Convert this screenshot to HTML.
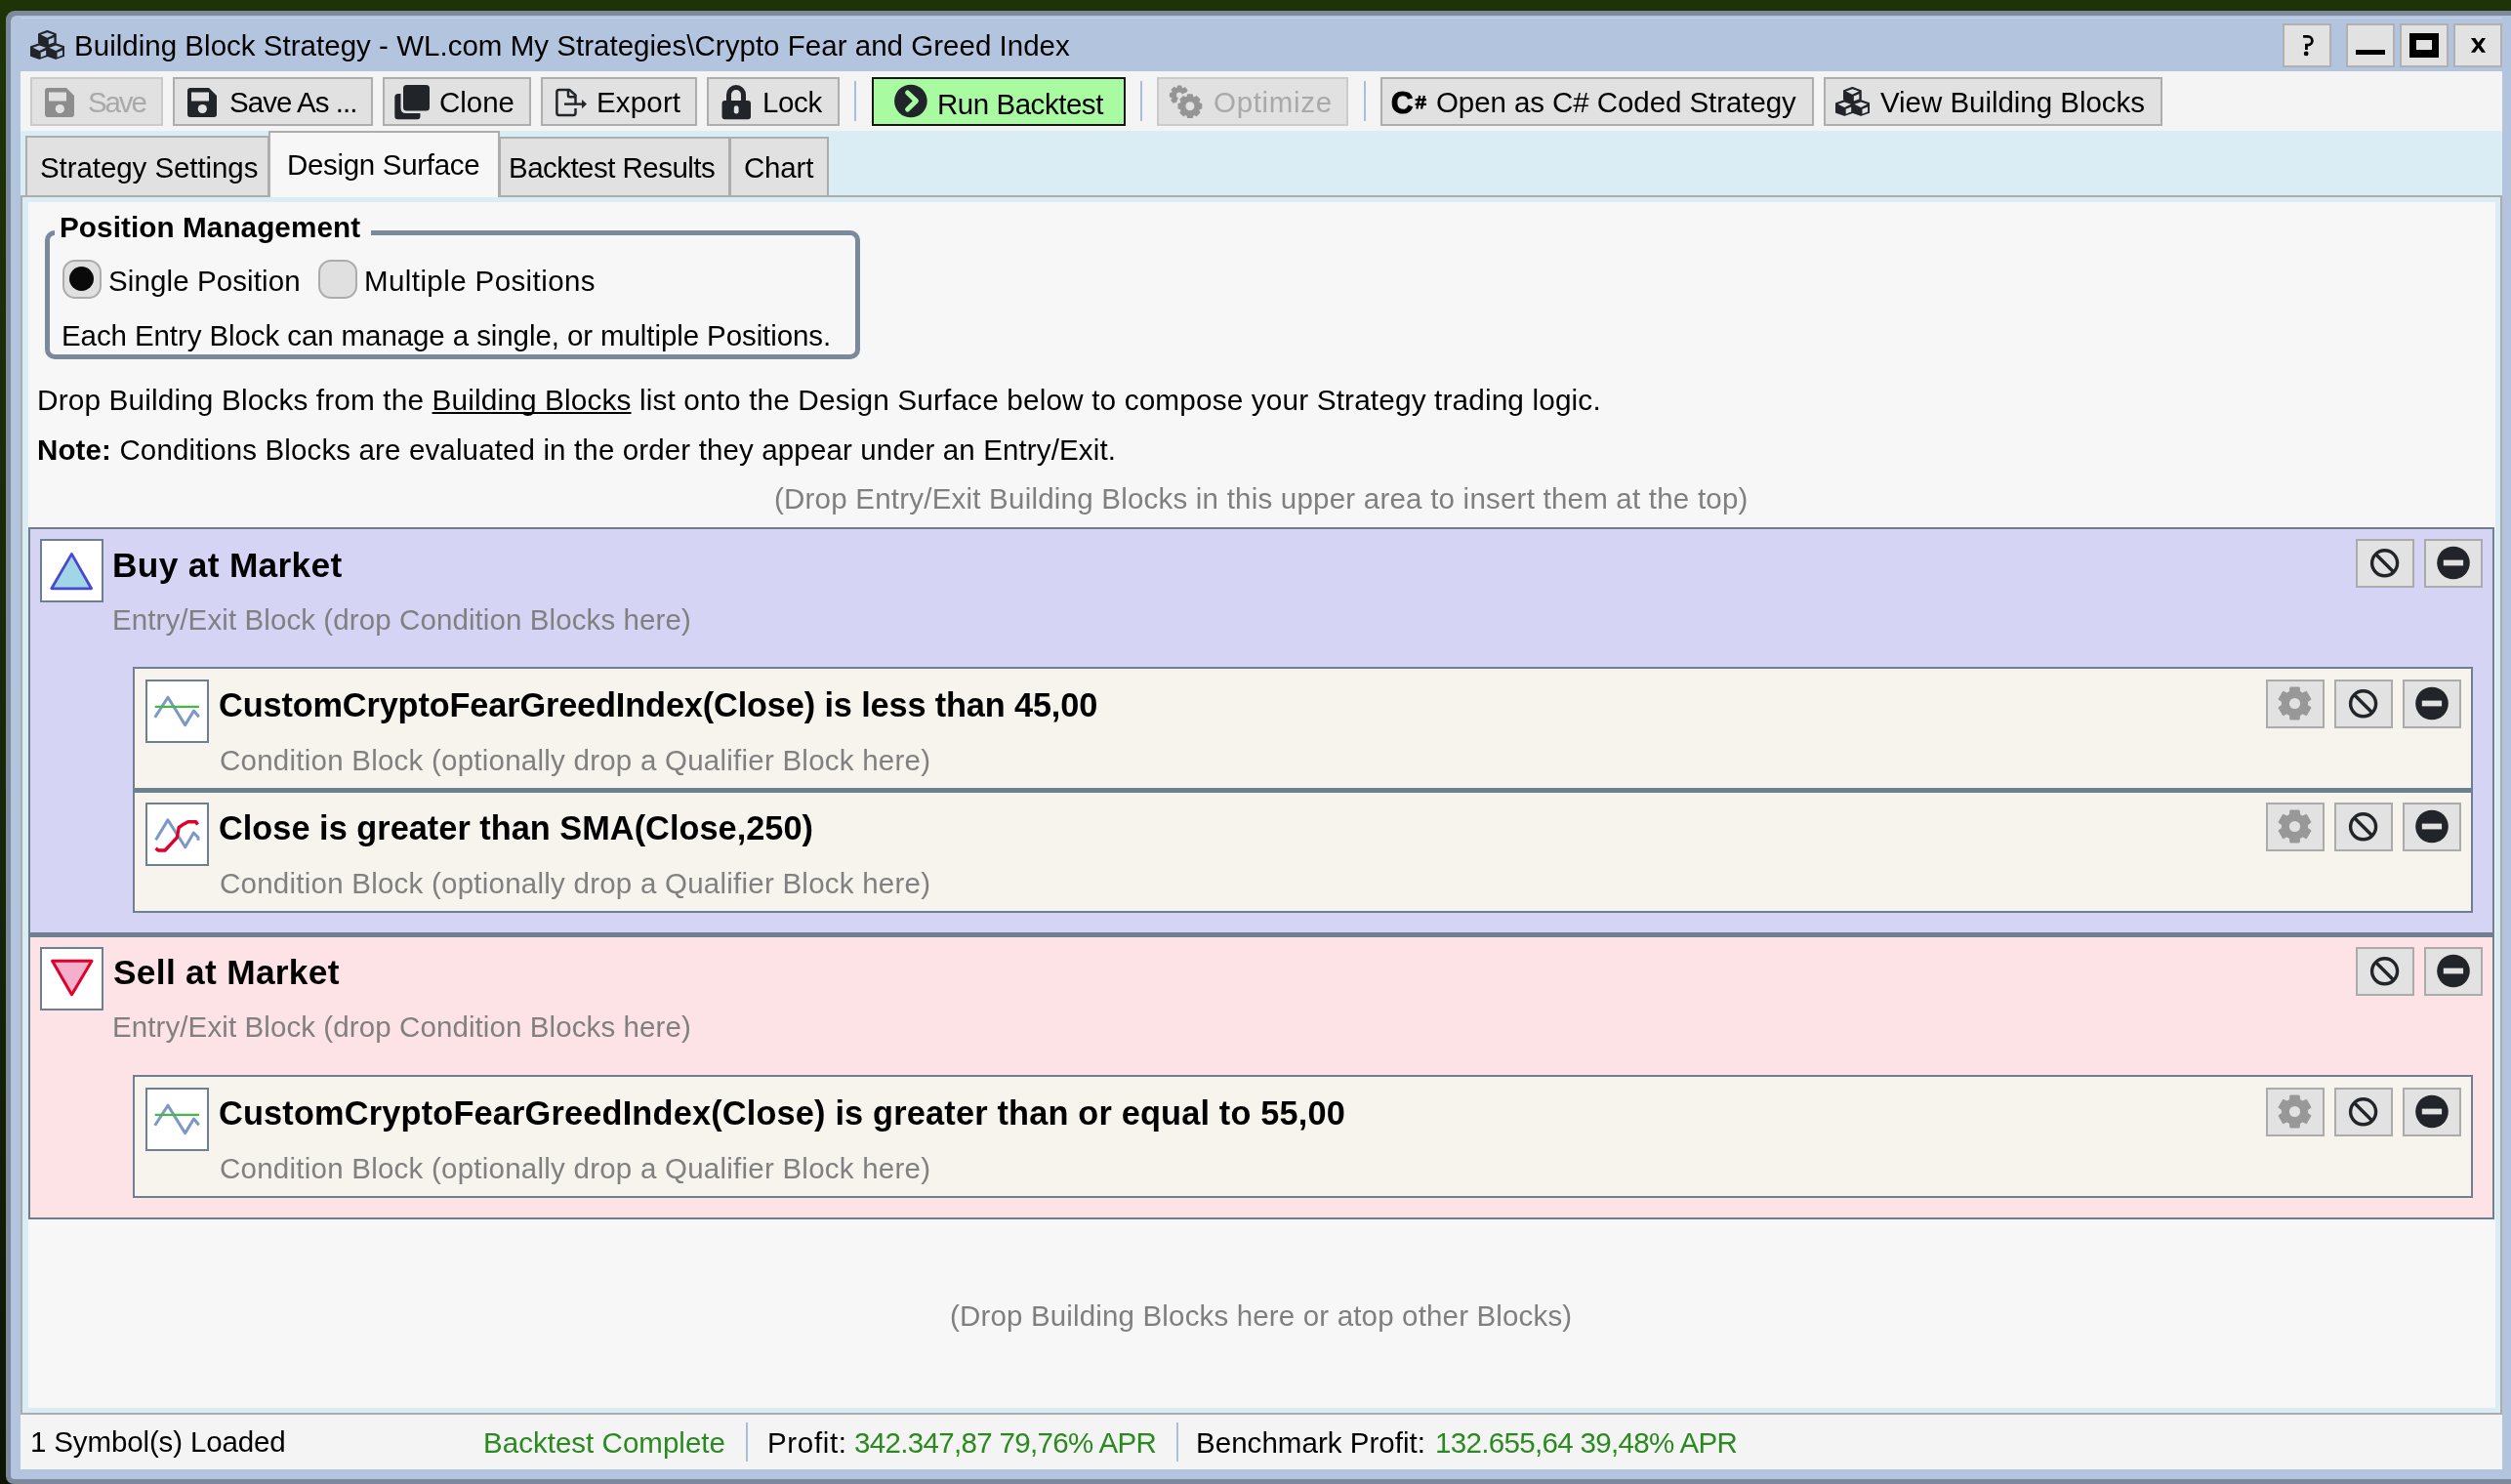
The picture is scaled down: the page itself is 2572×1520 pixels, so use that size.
<!DOCTYPE html>
<html><head><meta charset="utf-8"><title>Building Block Strategy</title><style>
html,body{margin:0;padding:0;}
body{width:2572px;height:1520px;position:relative;overflow:hidden;background:#1d3105;font-family:"Liberation Sans",sans-serif;}
.a{position:absolute;}
.t{position:absolute;white-space:pre;line-height:1;will-change:transform;}
.bt{position:absolute;box-sizing:border-box;border:2px solid #adadad;background:#e1e1e1;}
.dis{border-color:#cbcbcb;}
.blk{position:absolute;box-sizing:border-box;border:2px solid #6e7f91;}
.ib{position:absolute;box-sizing:border-box;border:2.4px solid #6e7f91;background:#fff;width:65px;height:65px;}
</style></head><body>
<div class="a" style="left:0px;top:0px;width:2572px;height:1520px;background:linear-gradient(180deg,#1e3306 0%,#16240a 60%,#0c1504 100%);"></div>
<div class="a" style="left:6px;top:11px;width:2580px;height:1509px;background:#7c8a9b;border-top-left-radius:9px;border-bottom-left-radius:8px;"></div>
<div class="a" style="left:11px;top:16px;width:2580px;height:1499px;background:#b3c4de;border-top-left-radius:6px;border-bottom-left-radius:4px;"></div>
<div class="a" style="left:21px;top:18px;width:2542px;height:1.2px;background:#c6d4e9;"></div>
<svg class="a" style="left:31px;top:31px" width="35" height="30" viewBox="0 0 35 30"><path d="M17.40,0.60 L26.05,3.83 L26.05,12.77 L17.40,16.00 L8.75,12.77 L8.75,3.83Z" fill="#212428" stroke="#212428" stroke-width="1.4" stroke-linejoin="round"/><path d="M17.40,2.30 L24.05,4.60 L17.40,7.70 L10.75,4.60Z" fill="#b3c4de"/><path d="M18.80,9.50 L24.35,7.20 L24.35,12.40 L18.80,14.50Z" fill="#b3c4de"/><path d="M9.30,13.80 L17.95,17.03 L17.95,25.97 L9.30,29.20 L0.65,25.97 L0.65,17.03Z" fill="#212428" stroke="#212428" stroke-width="1.4" stroke-linejoin="round"/><path d="M9.30,15.50 L15.95,17.80 L9.30,20.90 L2.65,17.80Z" fill="#b3c4de"/><path d="M10.70,22.70 L16.25,20.40 L16.25,25.60 L10.70,27.70Z" fill="#b3c4de"/><path d="M26.10,13.80 L34.75,17.03 L34.75,25.97 L26.10,29.20 L17.45,25.97 L17.45,17.03Z" fill="#212428" stroke="#212428" stroke-width="1.4" stroke-linejoin="round"/><path d="M26.10,15.50 L32.75,17.80 L26.10,20.90 L19.45,17.80Z" fill="#b3c4de"/><path d="M27.50,22.70 L33.05,20.40 L33.05,25.60 L27.50,27.70Z" fill="#b3c4de"/></svg>
<div class="t" style="left:76.00px;top:32.01px;color:#000;font-size:29.5px;letter-spacing:0.022px;">Building Block Strategy - WL.com My Strategies\Crypto Fear and Greed Index</div>
<div class="bt" style="left:2338px;top:24px;width:50px;height:45px;border-color:#b0b0b0;background:#e2e2e2"></div>
<div class="bt" style="left:2403px;top:24px;width:50px;height:45px;border-color:#b0b0b0;background:#e2e2e2"></div>
<div class="bt" style="left:2458px;top:24px;width:50px;height:45px;border-color:#b0b0b0;background:#e2e2e2"></div>
<div class="bt" style="left:2513px;top:24px;width:50px;height:45px;border-color:#b0b0b0;background:#e2e2e2"></div>
<svg class="a" style="left:2355px;top:33px" width="20" height="26" viewBox="0 0 20 26"><path d="M4.1,4.35 H9 A4.35,4.35 0 0 1 9,13.05 H7.45 V17.9" fill="none" stroke="#000" stroke-width="2.8"/><circle cx="7.2" cy="21.9" r="2.4" fill="#000"/></svg>
<div class="a" style="left:2413px;top:51px;width:30px;height:5px;background:#000;"></div>
<div class="a" style="left:2468px;top:34px;width:30px;height:25px;box-sizing:border-box;border:7px solid #000;border-bottom-width:8px;background:#e2e2e2;"></div>
<svg class="a" style="left:2520px;top:30px" width="36" height="32" viewBox="0 0 36 32"><path d="M10.88,9.05 L15.41,9.05 L18.53,13.79 L22.2,9.05 L26.08,9.05 L21.01,16.38 L26.08,23.71 L21.98,23.71 L18.53,18.97 L15.09,23.71 L10.88,23.71 L16.38,16.38Z" fill="#000"/></svg>
<div class="a" style="left:21px;top:73px;width:2542px;height:61px;background:#f4f4f4;"></div>
<div class="bt dis" style="left:31px;top:79px;width:136px;height:50px;"></div>
<svg class="a" style="left:46px;top:90px" width="30" height="30" viewBox="0 0 30 30"><path d="M3,0 H22 L30,8 V27 Q30,30 27,30 H3 Q0,30 0,27 V3 Q0,0 3,0Z" fill="#8d8d8d"/><rect x="4" y="4.5" width="18" height="9" fill="#e1e1e1"/><circle cx="15.3" cy="21.5" r="4.6" fill="#e1e1e1"/></svg>
<div class="t" style="left:89.50px;top:90.01px;color:#a9a9a9;font-size:29.5px;letter-spacing:-2.133px;">Save</div>
<div class="bt " style="left:177px;top:79px;width:205px;height:50px;"></div>
<svg class="a" style="left:192px;top:90px" width="30" height="30" viewBox="0 0 30 30"><path d="M3,0 H22 L30,8 V27 Q30,30 27,30 H3 Q0,30 0,27 V3 Q0,0 3,0Z" fill="#212428"/><rect x="4" y="4.5" width="18" height="9" fill="#e1e1e1"/><circle cx="15.3" cy="21.5" r="4.6" fill="#e1e1e1"/></svg>
<div class="t" style="left:235.10px;top:90.01px;color:#000;font-size:29.5px;letter-spacing:-0.950px;">Save As ...</div>
<div class="bt " style="left:392px;top:79px;width:152px;height:50px;"></div>
<svg class="a" style="left:404px;top:87px" width="36" height="36" viewBox="0 0 36 36"><rect x="9" y="0" width="27" height="26.5" rx="3.5" fill="#212428"/><path d="M4,9 H6.5 V23.5 Q6.5,29 12,29 H26.5 V32.3 Q26.5,35.3 23.5,35.3 H3.5 Q0.3,35.3 0.3,32 V12.5 Q0.3,9 4,9Z" fill="#212428"/></svg>
<div class="t" style="left:450.20px;top:90.01px;color:#000;font-size:29.5px;letter-spacing:-0.025px;">Clone</div>
<div class="bt " style="left:554px;top:79px;width:160px;height:50px;"></div>
<svg class="a" style="left:568px;top:89px" width="34" height="32" viewBox="0 0 34 32"><path d="M21.5,17.6 V8.5 L15.5,3.1 H4.5 Q2.4,3.1 2.4,5.2 V26.8 Q2.4,28.9 4.5,28.9 H19.4 Q21.5,28.9 21.5,26.8 V22" fill="none" stroke="#212428" stroke-width="2.5" stroke-linejoin="round"/><path d="M14,3.1 V9.2 Q14,10.3 15.1,10.3 H21.5" fill="none" stroke="#212428" stroke-width="2.5"/><path d="M10,17.6 H29" stroke="#212428" stroke-width="2.4"/><path d="M28,13 L33,17.6 L28,22.2Z" fill="#212428"/></svg>
<div class="t" style="left:610.70px;top:90.01px;color:#000;font-size:29.5px;letter-spacing:0.160px;">Export</div>
<div class="bt " style="left:724px;top:79px;width:136px;height:50px;"></div>
<svg class="a" style="left:739px;top:87px" width="31" height="36" viewBox="0 0 31 36"><path d="M7.5,16 V10 A7.5,7.5 0 0 1 22.5,10 V16" fill="none" stroke="#212428" stroke-width="5"/><rect x="0.5" y="16" width="29.5" height="19.2" rx="3" fill="#212428"/><rect x="12.8" y="21.3" width="4.8" height="8.3" rx="2.4" fill="#e1e1e1"/></svg>
<div class="t" style="left:781.20px;top:90.01px;color:#000;font-size:29.5px;letter-spacing:-0.367px;">Lock</div>
<div class="a" style="left:875px;top:83px;width:2px;height:41px;background:#a8bedc;"></div>
<div class="bt " style="left:893px;top:79px;width:260px;height:50px;border-color:#161616;background:#a8fba0;"></div>
<svg class="a" style="left:916px;top:86px" width="34" height="35" viewBox="0 0 34 35"><circle cx="16.9" cy="17.5" r="16.8" fill="#212428"/><path d="M13.6,9 L22.4,17.4 L13.6,26" fill="none" stroke="#a8fba0" stroke-width="5" stroke-linecap="round" stroke-linejoin="round"/></svg>
<div class="t" style="left:959.60px;top:92.01px;color:#000;font-size:29.5px;letter-spacing:-0.464px;">Run Backtest</div>
<div class="a" style="left:1168px;top:83px;width:2px;height:41px;background:#a8bedc;"></div>
<div class="bt dis" style="left:1185px;top:79px;width:196px;height:50px;"></div>
<svg class="a" style="left:1192px;top:84px" width="44" height="40" viewBox="0 0 44 40"><defs><mask id="gm"><rect x="0" y="0" width="44" height="40" fill="#fff"/><circle cx="26.9" cy="24.7" r="14.4" fill="#000"/></mask></defs><path d="M14.01,6.14 L14.43,4.01 L17.93,4.12 L18.22,6.26 L19.77,6.96 L21.57,5.75 L23.97,8.30 L22.66,10.03 L23.26,11.61 L25.39,12.03 L25.28,15.53 L23.14,15.82 L22.44,17.37 L23.65,19.17 L21.10,21.57 L19.37,20.26 L17.79,20.86 L17.37,22.99 L13.87,22.88 L13.58,20.74 L12.03,20.04 L10.23,21.25 L7.83,18.70 L9.14,16.97 L8.54,15.39 L6.41,14.97 L6.52,11.47 L8.66,11.18 L9.36,9.63 L8.15,7.83 L10.70,5.43 L12.43,6.74Z" fill="#959595" stroke="#959595" stroke-width="1.2" stroke-linejoin="round" mask="url(#gm)"/><circle cx="15.9" cy="13.5" r="2.9" fill="#e1e1e1"/><path d="M24.01,15.23 L24.59,12.92 L29.21,12.92 L29.79,15.23 L31.55,15.96 L33.59,14.74 L36.86,18.01 L35.64,20.05 L36.37,21.81 L38.68,22.39 L38.68,27.01 L36.37,27.59 L35.64,29.35 L36.86,31.39 L33.59,34.66 L31.55,33.44 L29.79,34.17 L29.21,36.48 L24.59,36.48 L24.01,34.17 L22.25,33.44 L20.21,34.66 L16.94,31.39 L18.16,29.35 L17.43,27.59 L15.12,27.01 L15.12,22.39 L17.43,21.81 L18.16,20.05 L16.94,18.01 L20.21,14.74 L22.25,15.96Z" fill="#959595" stroke="#959595" stroke-width="1.2" stroke-linejoin="round"/><circle cx="26.9" cy="24.7" r="4.5" fill="#e1e1e1"/></svg>
<div class="t" style="left:1243.20px;top:90.01px;color:#a9a9a9;font-size:29.5px;letter-spacing:0.686px;">Optimize</div>
<div class="a" style="left:1396.5px;top:83px;width:2px;height:41px;background:#a8bedc;"></div>
<div class="bt " style="left:1414px;top:79px;width:444px;height:50px;"></div>
<div class="t" style="left:1425.00px;top:89.74px;color:#000;font-size:31px;font-weight:bold;-webkit-text-stroke:1.2px #000;letter-spacing:1.000px;">C</div>
<svg class="a" style="left:1449px;top:97px" width="13" height="16" viewBox="0 0 13 16"><path d="M5.3,1 L2.4,14.6 M9.9,1 L7,14.6" stroke="#000" stroke-width="2.3"/><path d="M0.6,5.1 H12 M0.6,9.9 H12" stroke="#000" stroke-width="2.1"/></svg>
<div class="t" style="left:1471.00px;top:90.01px;color:#000;font-size:29.5px;letter-spacing:-0.075px;">Open as C# Coded Strategy</div>
<div class="bt " style="left:1868px;top:79px;width:347px;height:50px;"></div>
<svg class="a" style="left:1880px;top:89px" width="35" height="31" viewBox="0 0 35 31"><path d="M17.40,0.60 L26.05,3.83 L26.05,12.77 L17.40,16.00 L8.75,12.77 L8.75,3.83Z" fill="#212428" stroke="#212428" stroke-width="1.4" stroke-linejoin="round"/><path d="M17.40,2.30 L24.05,4.60 L17.40,7.70 L10.75,4.60Z" fill="#e1e1e1"/><path d="M18.80,9.50 L24.35,7.20 L24.35,12.40 L18.80,14.50Z" fill="#e1e1e1"/><path d="M9.30,13.80 L17.95,17.03 L17.95,25.97 L9.30,29.20 L0.65,25.97 L0.65,17.03Z" fill="#212428" stroke="#212428" stroke-width="1.4" stroke-linejoin="round"/><path d="M9.30,15.50 L15.95,17.80 L9.30,20.90 L2.65,17.80Z" fill="#e1e1e1"/><path d="M10.70,22.70 L16.25,20.40 L16.25,25.60 L10.70,27.70Z" fill="#e1e1e1"/><path d="M26.10,13.80 L34.75,17.03 L34.75,25.97 L26.10,29.20 L17.45,25.97 L17.45,17.03Z" fill="#212428" stroke="#212428" stroke-width="1.4" stroke-linejoin="round"/><path d="M26.10,15.50 L32.75,17.80 L26.10,20.90 L19.45,17.80Z" fill="#e1e1e1"/><path d="M27.50,22.70 L33.05,20.40 L33.05,25.60 L27.50,27.70Z" fill="#e1e1e1"/></svg>
<div class="t" style="left:1925.70px;top:90.01px;color:#000;font-size:29.5px;letter-spacing:-0.037px;">View Building Blocks</div>
<div class="a" style="left:21px;top:134px;width:2542px;height:68px;background:#daedf4;"></div>
<div class="a" style="left:21px;top:200px;width:2542px;height:1249px;box-sizing:border-box;border:2px solid #acacac;background:#daedf4;"></div>
<div class="a" style="left:28.5px;top:207px;width:2527px;height:1234.5px;background:#f7f7f7;"></div>
<div class="bt" style="left:26px;top:139px;width:250px;height:61px;border-bottom:none;"></div>
<div class="bt" style="left:511px;top:139.5px;width:237px;height:60.5px;border-bottom:none;"></div>
<div class="bt" style="left:747px;top:139.5px;width:102px;height:60.5px;border-bottom:none;"></div>
<div class="bt" style="left:275px;top:134px;width:236.5px;height:68px;border-bottom:none;background:#f7f7f7;"></div>
<div class="t" style="left:41.40px;top:156.91px;color:#000;font-size:29.5px;letter-spacing:-0.075px;">Strategy Settings</div>
<div class="t" style="left:294.20px;top:153.51px;color:#000;font-size:29.5px;letter-spacing:-0.315px;">Design Surface</div>
<div class="t" style="left:521.10px;top:156.61px;color:#000;font-size:29.5px;letter-spacing:-0.533px;">Backtest Results</div>
<div class="t" style="left:762.20px;top:156.61px;color:#000;font-size:29.5px;letter-spacing:-0.200px;">Chart</div>
<div class="a" style="left:46px;top:236px;width:835px;height:132px;box-sizing:border-box;border:5px solid #7a899b;border-radius:10px;"></div>
<div class="a" style="left:56px;top:228px;width:324px;height:14px;background:#f7f7f7;"></div>
<div class="t" style="left:60.70px;top:217.84px;color:#000;font-size:29.7px;font-weight:bold;letter-spacing:0.072px;">Position Management</div>
<div class="a" style="left:64px;top:266px;width:39.5px;height:39.5px;box-sizing:border-box;border:2.2px solid #acacac;background:#e0e0e0;border-radius:13px;"></div>
<div class="a" style="left:71px;top:273px;width:25px;height:25px;background:#0a0a0a;border-radius:50%;"></div>
<div class="a" style="left:326px;top:266px;width:39.5px;height:39.5px;box-sizing:border-box;border:2.2px solid #acacac;background:#e0e0e0;border-radius:13px;"></div>
<div class="t" style="left:110.50px;top:273.41px;color:#000;font-size:29.5px;letter-spacing:0.107px;">Single Position</div>
<div class="t" style="left:373.00px;top:273.41px;color:#000;font-size:29.5px;letter-spacing:0.412px;">Multiple Positions</div>
<div class="t" style="left:63.00px;top:328.81px;color:#000;font-size:29.5px;letter-spacing:-0.093px;">Each Entry Block can manage a single, or multiple Positions.</div>
<div class="t" style="left:38.20px;top:395.26px;color:#000;font-size:29.8px;letter-spacing:0.126px;">Drop Building Blocks from the <span style="text-decoration:underline;text-decoration-thickness:2px;text-underline-offset:2px;text-decoration-skip-ink:none">Building Blocks</span> list onto the Design Surface below to compose your Strategy trading logic.</div>
<div class="t" style="left:38.00px;top:446.41px;color:#000;font-size:29.5px;letter-spacing:0.137px;"><b>Note:</b> Conditions Blocks are evaluated in the order they appear under an Entry/Exit.</div>
<div class="t" style="left:792.60px;top:495.81px;color:#7f7f7f;font-size:29.5px;letter-spacing:0.219px;">(Drop Entry/Exit Building Blocks in this upper area to insert them at the top)</div>
<div class="blk" style="left:29px;top:540px;width:2526px;height:417px;background:#d6d4f5;border-top-width:2px"></div>
<div class="ib" style="left:41px;top:552px;"></div>
<svg class="a" style="left:41px;top:552px" width="65" height="65" viewBox="0 0 65 65"><path d="M32.4,15.4 L52.6,50.8 H11.8Z" fill="#a0d6e6" stroke="#4848d0" stroke-width="2.8" stroke-linejoin="round"/></svg>
<div class="t" style="left:115.30px;top:560.60px;color:#000;font-size:35.3px;font-weight:bold;letter-spacing:0.317px;">Buy at Market</div>
<div class="t" style="left:115.00px;top:620.01px;color:#808080;font-size:29.5px;letter-spacing:0.095px;">Entry/Exit Block (drop Condition Blocks here)</div>
<div class="bt" style="left:2413px;top:552px;width:60px;height:50px;border-color:#ababab;background:#e2e2e2"></div>
<svg class="a" style="left:2425px;top:559px" width="36" height="36" viewBox="0 0 36 36"><circle cx="17.6" cy="17.8" r="13" fill="none" stroke="#212428" stroke-width="3.4"/><path d="M8.6,8.8 L26.6,26.8" stroke="#212428" stroke-width="3.4"/></svg>
<div class="bt" style="left:2483px;top:552px;width:60px;height:50px;border-color:#ababab;background:#e2e2e2"></div>
<svg class="a" style="left:2495px;top:559px" width="36" height="36" viewBox="0 0 36 36"><circle cx="18" cy="17.5" r="16.8" fill="#212428"/><rect x="7.8" y="14.6" width="20.3" height="5.8" fill="#e2e2e2"/></svg>
<div class="blk" style="left:136px;top:683px;width:2397px;height:126px;background:#f7f4ee;border-top-width:2px"></div>
<div class="ib" style="left:148.6px;top:696px;"></div>
<svg class="a" style="left:148.6px;top:696px" width="65" height="65" viewBox="0 0 65 65"><polyline points="9.7,38.8 23,18.2 40.6,46.6 49.5,32.1 54.8,38.2" fill="none" stroke="#7b98c6" stroke-width="3" stroke-linejoin="round"/><path d="M9.7,27.9 H54.9" stroke="#45b945" stroke-width="2.4"/></svg>
<div class="t" style="left:223.60px;top:704.95px;color:#000;font-size:34.3px;font-weight:bold;letter-spacing:-0.137px;">CustomCryptoFearGreedIndex(Close) is less than 45,00</div>
<div class="t" style="left:224.50px;top:763.81px;color:#808080;font-size:29.5px;letter-spacing:0.238px;">Condition Block (optionally drop a Qualifier Block here)</div>
<div class="bt" style="left:2321px;top:696px;width:60px;height:50px;border-color:#ababab;background:#e2e2e2"></div>
<svg class="a" style="left:2333px;top:703px" width="36" height="36" viewBox="0 0 36 36"><path d="M12.50,5.29 L12.88,1.04 L22.12,1.04 L22.50,5.29 L25.58,7.06 L29.45,5.27 L34.07,13.27 L30.58,15.73 L30.58,19.27 L34.07,21.73 L29.45,29.73 L25.58,27.94 L22.50,29.71 L22.12,33.96 L12.88,33.96 L12.50,29.71 L9.42,27.94 L5.55,29.73 L0.93,21.73 L4.42,19.27 L4.42,15.73 L0.93,13.27 L5.55,5.27 L9.42,7.06Z" fill="#989898" stroke="#989898" stroke-width="1" stroke-linejoin="round"/><circle cx="17.5" cy="17.5" r="5.6" fill="#e2e2e2"/></svg>
<div class="bt" style="left:2391px;top:696px;width:60px;height:50px;border-color:#ababab;background:#e2e2e2"></div>
<svg class="a" style="left:2403px;top:703px" width="36" height="36" viewBox="0 0 36 36"><circle cx="17.6" cy="17.8" r="13" fill="none" stroke="#212428" stroke-width="3.4"/><path d="M8.6,8.8 L26.6,26.8" stroke="#212428" stroke-width="3.4"/></svg>
<div class="bt" style="left:2461px;top:696px;width:60px;height:50px;border-color:#ababab;background:#e2e2e2"></div>
<svg class="a" style="left:2473px;top:703px" width="36" height="36" viewBox="0 0 36 36"><circle cx="18" cy="17.5" r="16.8" fill="#212428"/><rect x="7.8" y="14.6" width="20.3" height="5.8" fill="#e2e2e2"/></svg>
<div class="blk" style="left:136px;top:809px;width:2397px;height:126px;background:#f7f4ee;border-top-width:3px"></div>
<div class="ib" style="left:148.6px;top:822px;"></div>
<svg class="a" style="left:148.6px;top:822px" width="65" height="65" viewBox="0 0 65 65"><polyline points="10.6,38.2 22.9,17.9 40.8,45.8 49.3,31.1 54,35.8 54,38.7" fill="none" stroke="#7b98c6" stroke-width="3" stroke-linejoin="round"/><path d="M10.6,46.7 L13,49 H20 L32.3,35.8 L34.2,25.5 L39,22.2 L43.6,19.8 H51.6 L53.5,22.6" fill="none" stroke="#de0029" stroke-width="3.4" stroke-linejoin="round"/></svg>
<div class="t" style="left:223.60px;top:830.95px;color:#000;font-size:34.3px;font-weight:bold;letter-spacing:0.026px;">Close is greater than SMA(Close,250)</div>
<div class="t" style="left:224.50px;top:889.81px;color:#808080;font-size:29.5px;letter-spacing:0.238px;">Condition Block (optionally drop a Qualifier Block here)</div>
<div class="bt" style="left:2321px;top:822px;width:60px;height:50px;border-color:#ababab;background:#e2e2e2"></div>
<svg class="a" style="left:2333px;top:829px" width="36" height="36" viewBox="0 0 36 36"><path d="M12.50,5.29 L12.88,1.04 L22.12,1.04 L22.50,5.29 L25.58,7.06 L29.45,5.27 L34.07,13.27 L30.58,15.73 L30.58,19.27 L34.07,21.73 L29.45,29.73 L25.58,27.94 L22.50,29.71 L22.12,33.96 L12.88,33.96 L12.50,29.71 L9.42,27.94 L5.55,29.73 L0.93,21.73 L4.42,19.27 L4.42,15.73 L0.93,13.27 L5.55,5.27 L9.42,7.06Z" fill="#989898" stroke="#989898" stroke-width="1" stroke-linejoin="round"/><circle cx="17.5" cy="17.5" r="5.6" fill="#e2e2e2"/></svg>
<div class="bt" style="left:2391px;top:822px;width:60px;height:50px;border-color:#ababab;background:#e2e2e2"></div>
<svg class="a" style="left:2403px;top:829px" width="36" height="36" viewBox="0 0 36 36"><circle cx="17.6" cy="17.8" r="13" fill="none" stroke="#212428" stroke-width="3.4"/><path d="M8.6,8.8 L26.6,26.8" stroke="#212428" stroke-width="3.4"/></svg>
<div class="bt" style="left:2461px;top:822px;width:60px;height:50px;border-color:#ababab;background:#e2e2e2"></div>
<svg class="a" style="left:2473px;top:829px" width="36" height="36" viewBox="0 0 36 36"><circle cx="18" cy="17.5" r="16.8" fill="#212428"/><rect x="7.8" y="14.6" width="20.3" height="5.8" fill="#e2e2e2"/></svg>
<div class="blk" style="left:29px;top:957px;width:2526px;height:292px;background:#fde3e5;border-top-width:3px"></div>
<div class="ib" style="left:41px;top:970px;"></div>
<svg class="a" style="left:41px;top:970px" width="65" height="65" viewBox="0 0 65 65"><path d="M12.6,14.2 H53 L32.5,48.8Z" fill="#f5aecb" stroke="#e0002b" stroke-width="3" stroke-linejoin="round"/></svg>
<div class="t" style="left:116.30px;top:977.60px;color:#000;font-size:35.3px;font-weight:bold;letter-spacing:0.300px;">Sell at Market</div>
<div class="t" style="left:115.00px;top:1037.01px;color:#808080;font-size:29.5px;letter-spacing:0.095px;">Entry/Exit Block (drop Condition Blocks here)</div>
<div class="bt" style="left:2413px;top:970px;width:60px;height:50px;border-color:#ababab;background:#e2e2e2"></div>
<svg class="a" style="left:2425px;top:977px" width="36" height="36" viewBox="0 0 36 36"><circle cx="17.6" cy="17.8" r="13" fill="none" stroke="#212428" stroke-width="3.4"/><path d="M8.6,8.8 L26.6,26.8" stroke="#212428" stroke-width="3.4"/></svg>
<div class="bt" style="left:2483px;top:970px;width:60px;height:50px;border-color:#ababab;background:#e2e2e2"></div>
<svg class="a" style="left:2495px;top:977px" width="36" height="36" viewBox="0 0 36 36"><circle cx="18" cy="17.5" r="16.8" fill="#212428"/><rect x="7.8" y="14.6" width="20.3" height="5.8" fill="#e2e2e2"/></svg>
<div class="blk" style="left:136px;top:1101px;width:2397px;height:126px;background:#f7f4ee;border-top-width:2px"></div>
<div class="ib" style="left:148.6px;top:1114px;"></div>
<svg class="a" style="left:148.6px;top:1114px" width="65" height="65" viewBox="0 0 65 65"><polyline points="9.7,38.8 23,18.2 40.6,46.6 49.5,32.1 54.8,38.2" fill="none" stroke="#7b98c6" stroke-width="3" stroke-linejoin="round"/><path d="M9.7,27.9 H54.9" stroke="#45b945" stroke-width="2.4"/></svg>
<div class="t" style="left:223.60px;top:1122.95px;color:#000;font-size:34.3px;font-weight:bold;letter-spacing:0.186px;">CustomCryptoFearGreedIndex(Close) is greater than or equal to 55,00</div>
<div class="t" style="left:224.50px;top:1181.81px;color:#808080;font-size:29.5px;letter-spacing:0.238px;">Condition Block (optionally drop a Qualifier Block here)</div>
<div class="bt" style="left:2321px;top:1114px;width:60px;height:50px;border-color:#ababab;background:#e2e2e2"></div>
<svg class="a" style="left:2333px;top:1121px" width="36" height="36" viewBox="0 0 36 36"><path d="M12.50,5.29 L12.88,1.04 L22.12,1.04 L22.50,5.29 L25.58,7.06 L29.45,5.27 L34.07,13.27 L30.58,15.73 L30.58,19.27 L34.07,21.73 L29.45,29.73 L25.58,27.94 L22.50,29.71 L22.12,33.96 L12.88,33.96 L12.50,29.71 L9.42,27.94 L5.55,29.73 L0.93,21.73 L4.42,19.27 L4.42,15.73 L0.93,13.27 L5.55,5.27 L9.42,7.06Z" fill="#989898" stroke="#989898" stroke-width="1" stroke-linejoin="round"/><circle cx="17.5" cy="17.5" r="5.6" fill="#e2e2e2"/></svg>
<div class="bt" style="left:2391px;top:1114px;width:60px;height:50px;border-color:#ababab;background:#e2e2e2"></div>
<svg class="a" style="left:2403px;top:1121px" width="36" height="36" viewBox="0 0 36 36"><circle cx="17.6" cy="17.8" r="13" fill="none" stroke="#212428" stroke-width="3.4"/><path d="M8.6,8.8 L26.6,26.8" stroke="#212428" stroke-width="3.4"/></svg>
<div class="bt" style="left:2461px;top:1114px;width:60px;height:50px;border-color:#ababab;background:#e2e2e2"></div>
<svg class="a" style="left:2473px;top:1121px" width="36" height="36" viewBox="0 0 36 36"><circle cx="18" cy="17.5" r="16.8" fill="#212428"/><rect x="7.8" y="14.6" width="20.3" height="5.8" fill="#e2e2e2"/></svg>
<div class="t" style="left:973.00px;top:1333.01px;color:#7f7f7f;font-size:29.5px;letter-spacing:0.160px;">(Drop Building Blocks here or atop other Blocks)</div>
<div class="a" style="left:21px;top:1449px;width:2542px;height:56px;background:#f4f4f4;"></div>
<div class="t" style="left:31.00px;top:1462.01px;color:#000;font-size:29.5px;letter-spacing:-0.135px;">1 Symbol(s) Loaded</div>
<div class="t" style="left:495.40px;top:1462.51px;color:#2b8a1f;font-size:29.5px;letter-spacing:0.025px;">Backtest Complete</div>
<div class="a" style="left:764px;top:1457px;width:2px;height:40px;background:#a8bedc;"></div>
<div class="t" style="left:786.20px;top:1462.51px;color:#000;font-size:29.5px;letter-spacing:0.667px;">Profit:</div>
<div class="t" style="left:875.20px;top:1462.51px;color:#2b8a1f;font-size:29.5px;letter-spacing:-0.660px;">342.347,87 79,76% APR</div>
<div class="a" style="left:1205px;top:1457px;width:2px;height:40px;background:#a8bedc;"></div>
<div class="t" style="left:1225.30px;top:1462.51px;color:#000;font-size:29.5px;letter-spacing:0.038px;">Benchmark Profit:</div>
<div class="t" style="left:1470.30px;top:1462.51px;color:#2b8a1f;font-size:29.5px;letter-spacing:-0.665px;">132.655,64 39,48% APR</div>
</body></html>
